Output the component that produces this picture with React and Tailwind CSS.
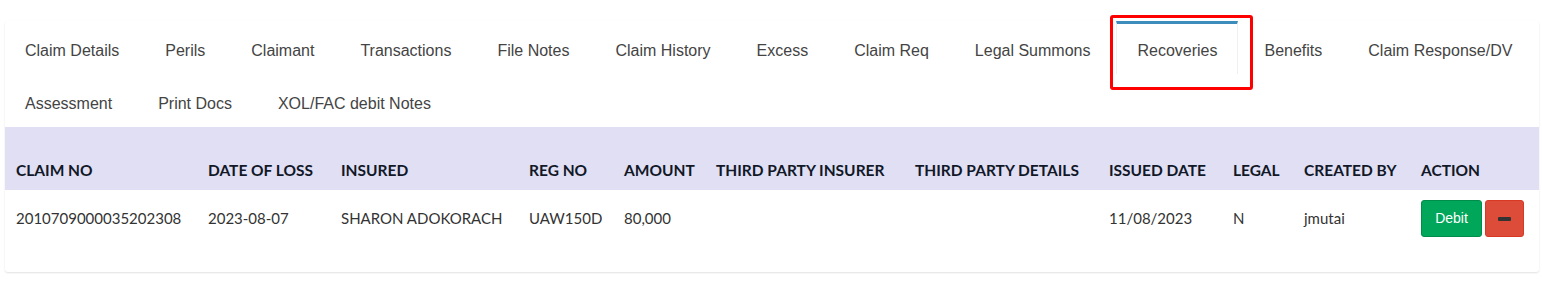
import { useState } from "react";

const tabsRow1 = [
  "Claim Details",
  "Perils",
  "Claimant",
  "Transactions",
  "File Notes",
  "Claim History",
  "Excess",
  "Claim Req",
  "Legal Summons",
  "Recoveries",
  "Benefits",
  "Claim Response/DV",
];
const tabsRow2 = ["Assessment", "Print Docs", "XOL/FAC debit Notes"];

const columns = [
  { label: "CLAIM NO", w: "w-[192px]" },
  { label: "DATE OF LOSS", w: "w-[133px]" },
  { label: "INSURED", w: "w-[188px]" },
  { label: "REG NO", w: "w-[95px]" },
  { label: "AMOUNT", w: "w-[92px]" },
  { label: "THIRD PARTY INSURER", w: "w-[199px]" },
  { label: "THIRD PARTY DETAILS", w: "w-[194px]" },
  { label: "ISSUED DATE", w: "w-[124px]" },
  { label: "LEGAL", w: "w-[71px]" },
  { label: "CREATED BY", w: "w-[117px]" },
  { label: "ACTION", w: "w-[129px]" },
];

const row = {
  claimNo: "2010709000035202308",
  dateOfLoss: "2023-08-07",
  insured: "SHARON ADOKORACH",
  regNo: "UAW150D",
  amount: "80,000",
  tpInsurer: "",
  tpDetails: "",
  issued: "11/08/2023",
  legal: "N",
  createdBy: "jmutai",
};

function Tab({ label, active, onClick }) {
  return (
    <li
      onClick={onClick}
      className={`relative cursor-pointer whitespace-nowrap border-t-[3px] pt-[15px] pb-[11px] text-[16px] leading-6 text-[#444] ${
        active
          ? "border-t-[#3c8dbc] bg-white border-x border-x-[#f0f0f0] px-5"
          : "border-t-transparent px-5"
      }`}
    >
      {label}
      {active && (
        <span className="pointer-events-none absolute -left-[7px] -top-[9px] h-[75px] w-[143px] rounded-[3px] border-[3px] border-[#ff0000]" />
      )}
    </li>
  );
}

export default function App() {
  const [active, setActive] = useState("Recoveries");

  return (
    <div className="min-h-[292px] bg-white pt-[21px] pl-[5px] font-['Lato',sans-serif]">
      <div className="w-[1534px] rounded-[3px] bg-white shadow-[0_1px_2px_rgba(0,0,0,0.12)] pb-[25px]">
        <ul className="flex flex-wrap gap-x-[6px] font-['Liberation_Sans',sans-serif]">
          {tabsRow1.map((t) => (
            <Tab key={t} label={t} active={active === t} onClick={() => setActive(t)} />
          ))}
          <li className="basis-full h-0" />
          {tabsRow2.map((t) => (
            <Tab key={t} label={t} active={active === t} onClick={() => setActive(t)} />
          ))}
        </ul>

        <table className="table-fixed w-full border-collapse">
          <thead>
            <tr className="bg-[#e1dff4]">
              {columns.map((c) => (
                <th
                  key={c.label}
                  className={`${c.w} pl-[11px] pr-0 pt-[32px] pb-[9px] text-left align-bottom text-[15.5px] leading-[22px] font-bold text-[#111827] whitespace-nowrap`}
                >
                  {c.label}
                </th>
              ))}
            </tr>
          </thead>
          <tbody className="text-[15px] text-[#333]">
            <tr>
              <td className="pl-[11px] py-[10px] whitespace-nowrap">{row.claimNo}</td>
              <td className="pl-[11px] py-[10px]">{row.dateOfLoss}</td>
              <td className="pl-[11px] py-[10px] whitespace-nowrap">{row.insured}</td>
              <td className="pl-[11px] py-[10px]">{row.regNo}</td>
              <td className="pl-[11px] py-[10px]">{row.amount}</td>
              <td className="pl-[11px] py-[10px]">{row.tpInsurer}</td>
              <td className="pl-[11px] py-[10px]">{row.tpDetails}</td>
              <td className="pl-[11px] py-[10px]">{row.issued}</td>
              <td className="pl-[11px] py-[10px]">{row.legal}</td>
              <td className="pl-[11px] py-[10px]">{row.createdBy}</td>
              <td className="pl-[11px] py-[10px]">
                <div className="flex gap-[3px]">
                  <button className="h-[37px] w-[61px] rounded-[3px] border border-[#008d4c] bg-[#00a65a] text-[14px] text-white font-['Liberation_Sans',sans-serif]">
                    Debit
                  </button>
                  <button className="flex h-[37px] w-[39px] items-center justify-center rounded-[3px] border border-[#d73925] bg-[#dd4b39]">
                    <span className="block h-[4px] w-[13px] rounded-[1px] bg-[#333]" />
                  </button>
                </div>
              </td>
            </tr>
          </tbody>
        </table>
      </div>
    </div>
  );
}
